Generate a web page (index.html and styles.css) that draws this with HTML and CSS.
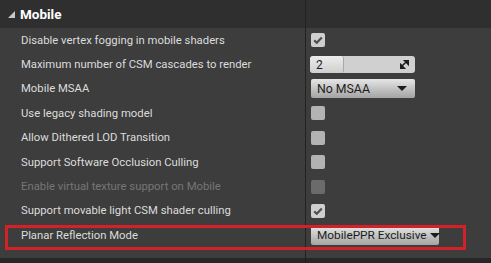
FILE: index.html
```html
<!DOCTYPE html>
<html>
<head>
<meta charset="utf-8">
<link rel="stylesheet" href="styles.css">
</head>
<body>
<div class="panel">
  <div class="header">
    <div class="hcell"><span class="tri"></span><span class="htitle">Mobile</span></div>
    <div class="vcell"></div>
  </div>
  <div class="row">
    <div class="label">Disable vertex fogging in mobile shaders</div>
    <div class="vcell"><span class="cb on"><svg viewBox="0 0 14 14" width="14" height="14"><path d="M3.2 7.4 L5.8 9.8 L10.8 4.4" fill="none" stroke="#4f4f4f" stroke-width="2.2"/></svg></span></div>
  </div>
  <div class="row">
    <div class="label">Maximum number of CSM cascades to render</div>
    <div class="vcell"><div class="spin"><div class="fill">2</div><svg class="rsz" viewBox="0 0 9 9" width="9" height="9"><path d="M4 0 H9 V5 Z M0 4 V9 H5 Z M2 6 L6 2" fill="#1e1e1e" stroke="#1e1e1e" stroke-width="1.6"/></svg></div></div>
  </div>
  <div class="row">
    <div class="label">Mobile MSAA</div>
    <div class="vcell"><div class="combo w1"><span>No MSAA</span><span class="arr"></span></div></div>
  </div>
  <div class="row">
    <div class="label">Use legacy shading model</div>
    <div class="vcell"><span class="cb"></span></div>
  </div>
  <div class="row">
    <div class="label">Allow Dithered LOD Transition</div>
    <div class="vcell"><span class="cb"></span></div>
  </div>
  <div class="row">
    <div class="label">Support Software Occlusion Culling</div>
    <div class="vcell"><span class="cb"></span></div>
  </div>
  <div class="row">
    <div class="label dis">Enable virtual texture support on Mobile</div>
    <div class="vcell"><span class="cb off"></span></div>
  </div>
  <div class="row">
    <div class="label">Support movable light CSM shader culling</div>
    <div class="vcell"><span class="cb on"><svg viewBox="0 0 14 14" width="14" height="14"><path d="M3.2 7.4 L5.8 9.8 L10.8 4.4" fill="none" stroke="#4f4f4f" stroke-width="2.2"/></svg></span></div>
  </div>
  <div class="row hl">
    <div class="label">Planar Reflection Mode</div>
    <div class="vcell"><div class="combo w2"><span>MobilePPR Exclusive</span><span class="arr"></span></div></div>
    <div class="redbox"></div>
  </div>
  <div class="tail">
    <div class="tl"></div>
    <div class="vcell"></div>
  </div>
  <div class="foot">
    <div class="tl"></div>
    <div class="vcell"></div>
  </div>
</div>
</body>
</html>
```
FILE: styles.css
```css
* { box-sizing: border-box; }
html, body { margin: 0; padding: 0; }
body {
  width: 491px;
  height: 263px;
  overflow: hidden;
  background: #3d3d3d;
  font-family: Roboto, "Liberation Sans", sans-serif;
}
.panel { display: flex; flex-direction: column; }
.header, .row, .tail, .foot {
  display: grid;
  grid-template-columns: 305px 1fr;
}
.header { height: 28px; background: #2f2f2f; }
.vcell {
  border-left: 1px solid #222222;
  display: flex;
  align-items: center;
  padding-left: 4px;
}
.hcell { display: flex; align-items: center; padding-left: 8px; }
.tri {
  width: 0; height: 0;
  border-left: 7px solid transparent;
  border-bottom: 7px solid #c8c8c8;
  margin-right: 5px;
  margin-top: 1px;
}
.htitle { color: #ffffff; font-weight: bold; font-size: 13.5px; }
.row { height: 24.4px; position: relative; }
.label {
  display: flex;
  align-items: center;
  padding-left: 21px;
  color: #dcdcdc;
  font-size: 11.3px;
  white-space: nowrap;
}
.label.dis { color: #767676; }
.cb {
  width: 14px; height: 14px;
  border-radius: 2px;
  background: #b3b3b3;
  margin-left: 1px;
  display: block;
}
.cb svg { display: block; }
.cb.on { background: #cfcfcf; }
.cb.off { background: #6b6b6b; }
.spin {
  width: 105px; height: 17px;
  border-radius: 3px;
  background: #d0d0d0;
  display: flex;
  align-items: center;
  justify-content: space-between;
  overflow: hidden;
}
.spin .fill {
  width: 34px; height: 17px;
  background: linear-gradient(#ececec, #cfcfcf);
  border-right: 1px solid #a8a8a8;
  border-radius: 3px;
  color: #1a1a1a;
  font-size: 12px;
  padding-left: 6px;
  display: flex;
  align-items: center;
}
.rsz { margin-right: 6px; }
.combo {
  height: 19px;
  border-radius: 2px;
  background: linear-gradient(#e6e6e6, #bdbdbd 60%, #a4a4a4);
  color: #1c1c1c;
  font-size: 12.3px;
  display: flex;
  align-items: center;
  justify-content: space-between;
  padding: 0 8px 0 6px;
  margin-left: 1px;
  white-space: nowrap;
}
.w1 { width: 104px; }
.w2 { width: 128px; padding: 0 5px 0 6px; font-size: 11.8px; }
.w2 .arr { margin-left: 3px; }
.arr {
  flex: none;
  width: 0; height: 0;
  border-left: 5px solid transparent;
  border-right: 5px solid transparent;
  border-top: 5px solid #1c1c1c;
}
.redbox {
  position: absolute;
  left: 5px;
  top: 2px;
  width: 461px;
  height: 25px;
  border: 3px solid #d42027;
}
.tail { height: 10.5px; }
.foot { height: 5px; background: #262626; }
.foot .vcell { border-left-color: #1c1c1c; }
```
